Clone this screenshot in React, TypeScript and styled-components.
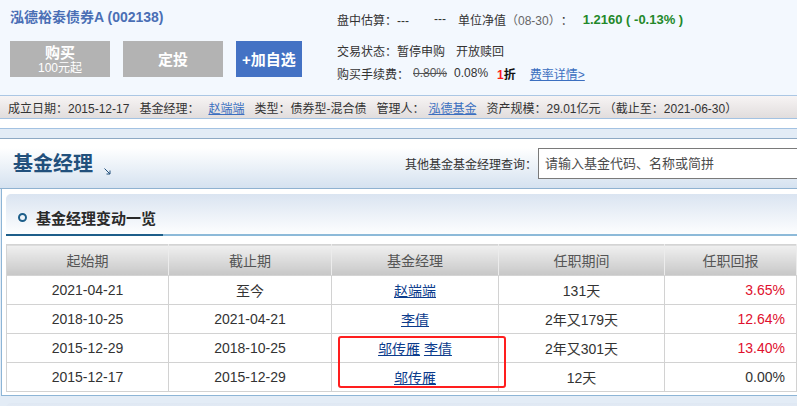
import React from "react";
import styled, { createGlobalStyle } from "styled-components";

const GlobalStyle = createGlobalStyle`
  html, body {
    margin: 0;
    padding: 0;
    background: #fff;
  }
  body {
    font-family: "Liberation Sans", Arial, "Noto Sans CJK SC", sans-serif;
    font-size: 12px;
    color: #333;
    overflow: hidden;
  }
  * {
    box-sizing: border-box;
  }
`;

const Page = styled.div`
  width: 797px;
  height: 406px;
  overflow: hidden;
`;

const TopBar = styled.div`
  display: flex;
  height: 96px;
  background: #f3f8fe;
  border-bottom: 1px solid #abc7e4;
`;

const TopLeft = styled.div`
  width: 337px;
  padding: 9px 0 0 10px;
`;

const FundTitle = styled.div`
  font-size: 14px;
  font-weight: bold;
  line-height: 16px;
  color: #4a6fb5;
`;

const ButtonRow = styled.div`
  display: flex;
  gap: 13px;
  margin-top: 16px;
`;

const ActionButton = styled.div<{ $w: number; $blue?: boolean }>`
  display: flex;
  flex-direction: column;
  align-items: center;
  justify-content: center;
  width: ${(p) => p.$w}px;
  height: 36px;
  background: ${(p) => (p.$blue ? "#4472c4" : "#b3b3b3")};
  color: #fff;
  font-size: 15px;
  font-weight: bold;
  line-height: 17px;
`;

const SmallLine = styled.span`
  font-size: 12px;
  font-weight: normal;
  line-height: 14px;
`;

const TopRight = styled.div`
  padding-top: 8px;
`;

const InfoRow = styled.div<{ $mt: number }>`
  display: flex;
  align-items: center;
  height: 22px;
  margin-top: ${(p) => p.$mt}px;
  font-size: 12px;
  white-space: nowrap;
`;

const Gap = styled.span<{ $w: number }>`
  display: inline-block;
  width: ${(p) => p.$w}px;
`;

const Muted = styled.span`
  color: #666;
`;

const NavValue = styled.span`
  font-size: 13px;
  font-weight: bold;
  color: #23882a;
`;

const Strike = styled.span`
  text-decoration: line-through;
  color: #555;
`;

const Discount = styled.span`
  font-weight: bold;
  color: #111;
`;

const RedNum = styled.span`
  color: #ff1a1a;
`;

const BlueLink = styled.a`
  color: #3b6fc0;
  text-decoration: underline;
  cursor: pointer;
`;

const FactBar = styled.div`
  display: flex;
  align-items: center;
  gap: 10px;
  height: 23px;
  padding-left: 8px;
  background: linear-gradient(#f7f4f4, #e1dddd);
  border-bottom: 1px solid #a3c2e2;
  white-space: nowrap;
  font-size: 12px;
`;

const Fact = styled.span`
  display: inline-flex;
  align-items: center;
  gap: 4px;
`;

const Section = styled.div`
  margin-top: 9px;
  padding-top: 9px;
  border-top: 1px solid #a3c2e2;
  background: #e3ecf6;
`;

const PanelHeader = styled.div`
  display: flex;
  align-items: center;
  height: 51px;
  border-top: 1px solid #8ea9c4;
  border-bottom: 1px solid #8fb2d1;
  background: linear-gradient(#ffffff 0%, #ffffff 18%, #d5e2f0 100%);
`;

const PanelTitle = styled.div`
  display: flex;
  align-items: flex-end;
  margin-left: 13px;
  font-size: 20px;
  font-weight: bold;
  line-height: 24px;
  color: #22507c;
`;

const CornerArrow = styled.svg`
  margin: 0 0 1px 11px;
`;

const Search = styled.div`
  display: flex;
  align-items: center;
  margin-left: auto;
`;

const SearchLabel = styled.span`
  font-size: 12px;
  margin-right: 1px;
`;

const SearchInput = styled.input`
  width: 259px;
  height: 31px;
  padding: 0 6px;
  border: 1px solid #7a7a7a;
  border-right: none;
  font-family: "Liberation Sans", Arial, "Noto Sans CJK SC", sans-serif;
  font-size: 13px;
  color: #333;
  outline: none;
  &::placeholder {
    color: #4a4a4a;
  }
`;

const Body = styled.div`
  margin-left: 1px;
  padding: 5px 0 3px 4px;
  border-left: 1px solid #8db5d6;
  border-bottom: 1px solid #8db5d6;
  background: #fff;
`;

const SubHeader = styled.div`
  display: flex;
  align-items: center;
  gap: 9px;
  height: 42px;
  padding: 4px 0 0 12px;
  border-top-left-radius: 5px;
  background:
    linear-gradient(#1d5e8a, #1d5e8a) left bottom / 157px 2px no-repeat,
    linear-gradient(#8dbad9, #8dbad9) left bottom / 100% 2px no-repeat,
    linear-gradient(#dae4f1, #ffffff);
`;

const Ring = styled.span`
  width: 9px;
  height: 9px;
  border: 2px solid #1d5e8a;
  border-radius: 50%;
`;

const SubTitle = styled.span`
  font-size: 15px;
  font-weight: bold;
  color: #2a2a2a;
`;

const TableWrap = styled.div`
  position: relative;
  margin-top: 8px;
  width: 790px;
`;

const Table = styled.table`
  width: 790px;
  border-collapse: collapse;
  table-layout: fixed;
  font-size: 14px;
`;

const Th = styled.th`
  height: 31px;
  padding: 0;
  font-weight: normal;
  color: #555;
  background: linear-gradient(#f0f0f0, #c7c7c7);
  border: 1px solid #d4d4d4;
  border-right-color: #ececec;
`;

const Td = styled.td<{ $right?: boolean; $color?: string }>`
  height: 29px;
  padding: ${(p) => (p.$right ? "0 11px 0 0" : "0")};
  text-align: ${(p) => (p.$right ? "right" : "center")};
  color: ${(p) => p.$color || "#333"};
  border: 1px solid #d2d2d2;
`;

const ManagerLink = styled.a`
  color: #0c3c8c;
  text-decoration: underline;
  cursor: pointer;
`;

const Mark = styled.div`
  position: absolute;
  left: 332px;
  top: 92px;
  width: 168px;
  height: 52px;
  border: 2px solid #ff1e1e;
  border-radius: 3px;
  pointer-events: none;
`;

const NextPanel = styled.div`
  height: 20px;
  margin: 7px 0 0 6px;
  border-top-left-radius: 5px;
  background: linear-gradient(#dfe8f3, #eef3f9);
`;

const rows = [
  { start: "2021-04-21", end: "至今", managers: ["赵端端"], term: "131天", ret: "3.65%", up: true },
  { start: "2018-10-25", end: "2021-04-21", managers: ["李倩"], term: "2年又179天", ret: "12.64%", up: true },
  { start: "2015-12-29", end: "2018-10-25", managers: ["邬传雁", "李倩"], term: "2年又301天", ret: "13.40%", up: true },
  { start: "2015-12-17", end: "2015-12-29", managers: ["邬传雁"], term: "12天", ret: "0.00%", up: false },
];

const widths = [162, 163, 167, 166, 132];

const App = () => {
  return (
    <Page>
      <GlobalStyle />
      <TopBar>
        <TopLeft>
          <FundTitle>泓德裕泰债券A (002138)</FundTitle>
          <ButtonRow>
            <ActionButton $w={100}>
              购买
              <SmallLine>100元起</SmallLine>
            </ActionButton>
            <ActionButton $w={100}>定投</ActionButton>
            <ActionButton $w={66} $blue>
              +加自选
            </ActionButton>
          </ButtonRow>
        </TopLeft>
        <TopRight>
          <InfoRow $mt={0}>
            盘中估算：---
            <Gap $w={25} />
            ---
            <Gap $w={12} />
            单位净值<Muted>（08-30）</Muted>：
            <Gap $w={10} />
            <NavValue>1.2160 ( -0.13% )</NavValue>
          </InfoRow>
          <InfoRow $mt={9}>
            交易状态：暂停申购
            <Gap $w={11} />
            开放赎回
          </InfoRow>
          <InfoRow $mt={1}>
            购买手续费：
            <Gap $w={4} />
            <Strike>0.80%</Strike>
            <Gap $w={7} />
            0.08%
            <Gap $w={9} />
            <Discount>
              <RedNum>1</RedNum>折
            </Discount>
            <Gap $w={14} />
            <BlueLink>费率详情&gt;</BlueLink>
          </InfoRow>
        </TopRight>
      </TopBar>

      <FactBar>
        <Fact>成立日期：2015-12-17</Fact>
        <Fact>
          基金经理：
          <Gap $w={1} />
          <BlueLink>赵端端</BlueLink>
        </Fact>
        <Fact>类型：债券型-混合债</Fact>
        <Fact>
          管理人：<BlueLink>泓德基金</BlueLink>
        </Fact>
        <Fact>
          资产规模：29.01亿元 （截止至：2021-06-30）
        </Fact>
      </FactBar>

      <Section>
        <PanelHeader>
          <PanelTitle>
            基金经理
            <CornerArrow width="7" height="7" viewBox="0 0 7 7">
              <path d="M0.5 0.5 L6 6 M6 2.5 V6 H2.5" stroke="#22507c" strokeWidth="1" fill="none" />
            </CornerArrow>
          </PanelTitle>
          <Search>
            <SearchLabel>其他基金基金经理查询：</SearchLabel>
            <SearchInput placeholder="请输入基金代码、名称或简拼" />
          </Search>
        </PanelHeader>

        <Body>
          <SubHeader>
            <Ring />
            <SubTitle>基金经理变动一览</SubTitle>
          </SubHeader>
          <TableWrap>
            <Table>
              <colgroup>
                {widths.map((w, i) => (
                  <col key={i} style={{ width: w }} />
                ))}
              </colgroup>
              <thead>
                <tr>
                  <Th>起始期</Th>
                  <Th>截止期</Th>
                  <Th>基金经理</Th>
                  <Th>任职期间</Th>
                  <Th>任职回报</Th>
                </tr>
              </thead>
              <tbody>
                {rows.map((r, i) => (
                  <tr key={i}>
                    <Td>{r.start}</Td>
                    <Td>{r.end}</Td>
                    <Td>
                      {r.managers.map((m, j) => (
                        <React.Fragment key={j}>
                          {j > 0 && " "}
                          <ManagerLink>{m}</ManagerLink>
                        </React.Fragment>
                      ))}
                    </Td>
                    <Td>{r.term}</Td>
                    <Td $right $color={r.up ? "#e0102e" : "#333"}>
                      {r.ret}
                    </Td>
                  </tr>
                ))}
              </tbody>
            </Table>
            <Mark />
          </TableWrap>
        </Body>
        <NextPanel />
      </Section>
    </Page>
  );
};

export default App;
